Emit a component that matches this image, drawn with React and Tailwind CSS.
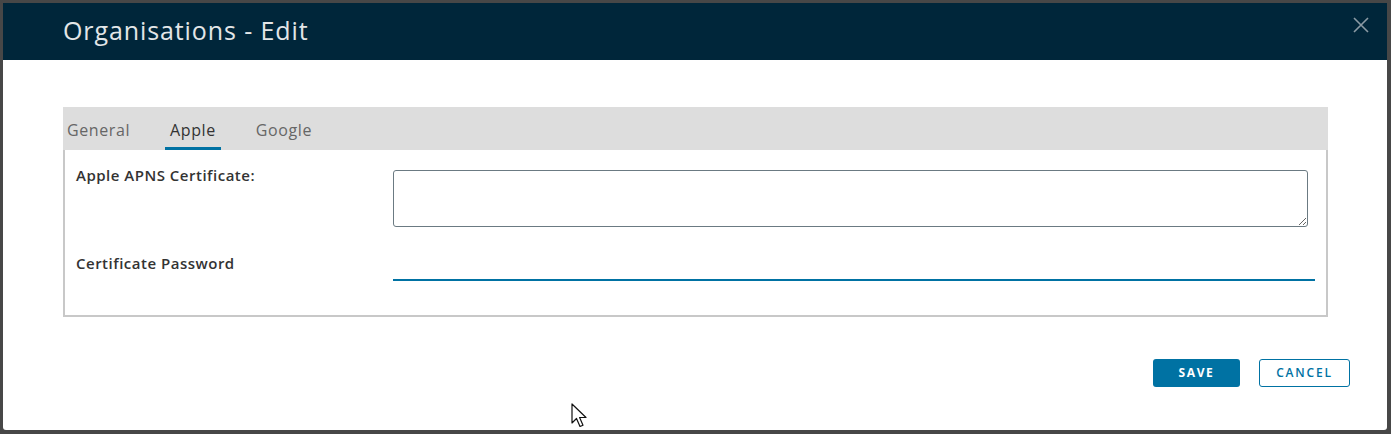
import React from 'react';

export default function App() {
  const tabs = ['General', 'Apple', 'Google'];
  const active = 'Apple';

  return (
    <div className="w-[1391px] h-[434px] bg-[#474747] p-[3px] pr-[4px] pb-[4px] font-['Open_Sans',sans-serif]">
      <div className="relative w-full h-full bg-white rounded-b-[3px] flex flex-col">
        {/* header */}
        <div className="h-[57px] bg-[#00263a] flex items-start justify-between pl-[60px] pr-[18px]">
          <h1 className="mt-[10px] text-[25px] leading-[34px] text-[#e3e6e8] tracking-[0.9px] font-normal">Organisations - Edit</h1>
          <svg className="mt-[14px]" width="16" height="16" viewBox="0 0 16 16" fill="none" stroke="#8b9aa4" strokeWidth="1.6">
            <path d="M1 1L15 15M15 1L1 15" />
          </svg>
        </div>

        {/* body */}
        <div className="flex-1 pt-[47px] pl-[60px] pr-[59px] flex flex-col">
          <div className="h-[43px] bg-[#dddddd] flex items-end pl-[4px] gap-[40px]">
            {tabs.map(t => (
              <div
                key={t}
                className={
                  t === active
                    ? 'h-full flex items-center border-b-[3px] border-[#0072a3] pt-[6px] px-[5px] -mx-[5px] text-[16px] tracking-[0.6px] text-[#333333]'
                    : 'h-full flex items-center pt-[3px] text-[16px] tracking-[0.6px] text-[#666666]'
                }
              >
                {t}
              </div>
            ))}
          </div>

          <div className="h-[167px] border-2 border-t-0 border-[#c8c8c8] pl-[11px] pr-[11px] pt-[20px]">
            <div className="flex">
              <label className="w-[317px] -mt-[3px] text-[15px] leading-[16px] font-semibold tracking-[0.5px] text-[#333333]">Apple APNS Certificate:</label>
              <textarea className="flex-1 h-[57px] border border-[#6b7a82] rounded-[3px] mr-[7px]" />
            </div>
            <div className="flex mt-[29px]">
              <label className="w-[317px] -mt-[3px] text-[15px] leading-[20px] font-semibold tracking-[0.5px] text-[#333333]">Certificate Password</label>
              <input type="password" className="flex-1 h-[22px] mt-[3px] border-b-2 border-[#0072a3] outline-none" />
            </div>
          </div>

          <div className="flex justify-end gap-[19px] mt-[42px] mr-[-22px]">
            <button className="w-[87px] h-[28px] bg-[#0072a3] text-white text-[12px] font-bold tracking-[1.6px] rounded-[3px]">SAVE</button>
            <button className="w-[91px] h-[28px] border border-[#0072a3] text-[#0072a3] text-[12px] font-semibold tracking-[1.8px] rounded-[3px]">CANCEL</button>
          </div>
        </div>

        {/* mouse cursor */}
        <svg className="absolute left-[568px] top-[400px]" width="18" height="28" viewBox="0 0 18 28">
          <path d="M1 1 L1 20 L5.5 15.5 L9 23.5 L12 22.2 L8.6 14.5 L15 14.5 Z" fill="white" stroke="#111" strokeWidth="1.2" strokeLinejoin="round" />
        </svg>
      </div>
    </div>
  );
}
